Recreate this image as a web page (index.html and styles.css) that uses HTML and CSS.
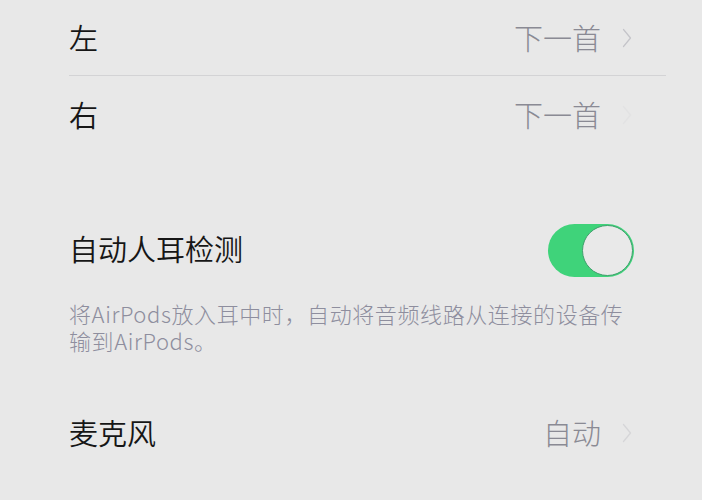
FILE: index.html
```html
<!DOCTYPE html>
<html lang="zh-CN">
<head>
  <meta charset="UTF-8" />
  <meta name="viewport" content="width=device-width, initial-scale=1.0" />
  <title>AirPods 设置</title>
  <link rel="stylesheet" href="styles.css">
</head>
<body>
  <div class="settings">
    <div class="group">
      <div class="row row-first">
        <span class="label">左</span>
        <span class="value">下一首</span>
        <svg class="chevron" viewBox="0 0 10 20"><path d="M1.5 1.5 L8.5 10 L1.5 18.5" /></svg>
      </div>
      <div class="divider"></div>
      <div class="row">
        <span class="label">右</span>
        <span class="value">下一首</span>
        <svg class="chevron faint" viewBox="0 0 10 20"><path d="M1.5 1.5 L8.5 10 L1.5 18.5" /></svg>
      </div>
    </div>

    <div class="group group-toggle">
      <div class="row">
        <span class="label">自动人耳检测</span>
        <div class="toggle on"><div class="knob"></div></div>
      </div>
      <p class="note">将AirPods放入耳中时，自动将音频线路从连接的设备传输到AirPods。</p>
    </div>

    <div class="group group-mic">
      <div class="row">
        <span class="label">麦克风</span>
        <span class="value">自动</span>
        <svg class="chevron soft" viewBox="0 0 10 20"><path d="M1.5 1.5 L8.5 10 L1.5 18.5" /></svg>
      </div>
    </div>
  </div>
</body>
</html>
```

FILE: styles.css
```css
:root {
  --bg: #e8e8e8;
  --text: #161616;
  --muted: #8a8a94;
  --note: #8e8e9e;
  --line: #d3d3d5;
  --green: #3fd37a;
}

* {
  box-sizing: border-box;
}

body {
  margin: 0;
  height: 500px;
  overflow: hidden;
  background: var(--bg);
  font-family: "Noto Sans CJK SC", "Noto Sans", sans-serif;
  color: var(--text);
}

.settings {
  padding-left: 69px;
  width: 666px;
}

.row {
  display: flex;
  align-items: center;
  height: 80px;
  padding-right: 34px;
  padding-bottom: 3px;
}

.row-first {
  height: 75px;
  padding-top: 3px;
}

.divider {
  height: 1px;
  background: var(--line);
}

.label {
  flex: 1;
  font-size: 29px;
  line-height: 1;
  font-weight: 350;
}

.value {
  font-size: 29px;
  line-height: 1;
  font-weight: 300;
  color: var(--muted);
  margin-right: 21px;
}

.chevron {
  width: 10px;
  height: 20px;
  fill: none;
  stroke: #c4c4c9;
  stroke-width: 1.2;
  stroke-linecap: round;
  stroke-linejoin: round;
}

.chevron.faint {
  opacity: 0.15;
}

.chevron.soft {
  opacity: 0.5;
}

.group-toggle {
  margin-top: 54px;
}

.group-mic {
  margin-top: 40px;
}

.toggle {
  width: 86px;
  height: 53px;
  margin: 4px -2px 0 0;
  border-radius: 27px;
  background: var(--green);
  position: relative;
}

.toggle .knob {
  position: absolute;
  right: 1px;
  top: 1px;
  width: 51px;
  height: 51px;
  border-radius: 50%;
  background: #e9e9e9;
  border: 1px solid #3f9f6c;
}

.note {
  margin: 10px 0 0;
  padding-right: 32px;
  font-size: 22px;
  font-weight: 300;
  letter-spacing: 0.6px;
  line-height: 27px;
  color: var(--note);
}
```
